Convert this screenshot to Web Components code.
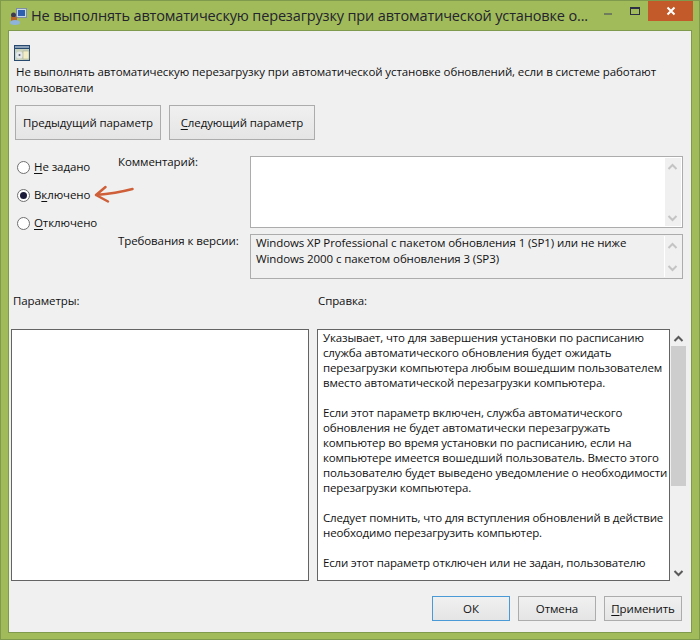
<!DOCTYPE html>
<html lang="ru">
<head>
<meta charset="utf-8">
<style>
    html, body { margin: 0; padding: 0; height: 640px; overflow: hidden; }
    body { font: 11.5px/16px "Open Sans", "Noto Sans", sans-serif; color: #111; }
</style>
</head>
<body>
<template id="template-win-dialog">
    <header>
        <svg class="app" width="20" height="20" viewBox="0 0 20 20">
            <rect x="7.500" y="1.500" width="10" height="9" fill="#c9d6e4" stroke="#7c8fa6"/>
            <rect x="9" y="3" width="7" height="6" fill="#2c5fb0"/>
            <circle cx="4.500" cy="8" r="2.500" fill="#3d3a52"/>
            <rect x="2" y="10" width="6" height="4" fill="#b9682c"/>
            <ellipse cx="6" cy="15.500" rx="5" ry="2.500" fill="#8fb4dc"/>
        </svg>
        <span class="title"><slot name="title"></slot></span>
        <svg class="ctl" width="47" height="20" viewBox="0 0 47 20">
            <rect x="3" y="12" width="8" height="2" fill="#6f7d5c"/>
            <rect x="29.500" y="6.500" width="9" height="7" fill="none" stroke="#2c2f45"/>
            <rect x="29" y="6" width="10" height="2" fill="#2c2f45"/>
        </svg>
        <div class="close"><svg width="10" height="10" viewBox="0 0 10 10"><path d="M1.500 1.500l7 7M8.500 1.500l-7 7" stroke="#fff" stroke-width="2"/></svg></div>
    </header>
    <main><slot></slot></main>
    <style>
        :host {
            display: flex;
            flex-direction: column;
            height: 640px;
            box-sizing: border-box;
            background: #a1bb5b;
            border: 1px solid #7f9a4c;
            padding: 0 7px 6px 7px;
        }
        header {
            height: 29px;
            flex: none;
            display: flex;
            margin-right: -1px;
        }
        .app { margin: 6px 0 0 1px; flex: none; }
        .title {
            margin: 3px 0 0 2px;
            flex: 1;
            min-width: 0;
            font: 14.5px/24px "Open Sans", sans-serif;
            color: #24242e;
            white-space: nowrap;
            letter-spacing: -0.15px;
        }
        .ctl { flex: none; }
        .close {
            width: 45px;
            height: 20px;
            background: #c35a2a;
            display: flex;
            align-items: center;
            justify-content: center;
            flex: none;
        }
        main {
            flex: 1;
            background: #f0f0f0;
            border: 1px solid #7f9a4c;
            display: flex;
            flex-direction: column;
            min-height: 0;
        }
    </style>
</template>

<template id="template-win-button">
    <button><slot></slot></button>
    <style>
        :host { display: block; flex: none; }
        button {
            display: block;
            width: 100%;
            height: 100%;
            padding: 0;
            font: inherit;
            letter-spacing: inherit;
            color: #111;
            border: 1px solid #acacac;
            background: linear-gradient(#f0f0f0, #e5e5e5);
            outline: none;
        }
        :host([primary]) button { border-color: #4a9ad8; }
    </style>
</template>

<template id="template-win-radio">
    <span class="dot"></span><span><slot></slot></span>
    <style>
        :host { display: flex; align-items: center; height: 16px; gap: 4px; }
        .dot {
            width: 11px;
            height: 11px;
            border: 1px solid #707070;
            border-radius: 50%;
            background: #fff;
            display: flex;
            align-items: center;
            justify-content: center;
            flex: none;
        }
        :host([checked]) .dot::after {
            content: "";
            width: 7px;
            height: 7px;
            border-radius: 50%;
            background: #1c1c3a;
        }
    </style>
</template>

<template id="template-win-edit">
    <div class="text"><slot></slot></div>
    <div class="bar">
        <svg width="16" height="10" viewBox="0 0 16 10"><path d="M3.500 7L7.500 3l4 4" fill="none" stroke="currentColor" stroke-width="2"/></svg>
        <svg width="16" height="10" viewBox="0 0 16 10"><path d="M3.500 3L7.500 7l4-4" fill="none" stroke="currentColor" stroke-width="2"/></svg>
    </div>
    <style>
        :host {
            display: flex;
            box-sizing: border-box;
            border: 1px solid #acacac;
            background: #fff;
        }
        .text { flex: 1; padding: 0 5px; min-width: 0; white-space: nowrap; }
        .bar {
            width: 16px;
            margin: 1px;
            background: #f0f0f0;
            color: #c4c4c4;
            display: flex;
            flex-direction: column;
            justify-content: space-between;
            padding: 4px 0 3px;
            flex: none;
        }
        :host([readonly]) { background: #f0f0f0; }
        :host([readonly]) .bar { border-left: 1px solid #fff; margin-left: 0; padding: 5px 0 4px; }
    </style>
</template>

<template id="template-win-list">
    <div class="text"><slot></slot></div>
    <style>
        :host {
            display: block;
            box-sizing: border-box;
            border: 1px solid #646464;
            background: #fff;
            overflow: hidden;
        }
        .text { padding: 0 5px; white-space: nowrap; line-height: 15px; letter-spacing: -0.15px; }
    </style>
</template>

<template id="template-win-scrollbar">
    <svg width="15" height="17" viewBox="0 0 15 17"><path d="M3.500 12L7.500 8l4 4" fill="none" stroke="#5a5a5a" stroke-width="2"/></svg>
    <div class="thumb"></div>
    <div class="track"></div>
    <svg width="15" height="16" viewBox="0 0 15 16"><path d="M3.500 6L7.500 10l4-4" fill="none" stroke="#5a5a5a" stroke-width="2"/></svg>
    <style>
        :host { display: flex; flex-direction: column; width: 15px; flex: none; }
        svg { flex: none; }
        .thumb { height: 140px; flex: none; background: #cdcdcd; }
        .track { flex: 1; }
    </style>
</template>

<template id="template-policy-form">
    <section class="desc">
        <svg width="16" height="16" viewBox="0 0 16 16">
            <rect x="0" y="0" width="16" height="16" fill="#27496d"/>
            <rect x="1" y="1" width="14" height="2" fill="#8aa0b8"/>
            <rect x="1" y="4" width="14" height="11" fill="#c9d2bc"/>
            <circle cx="5.500" cy="10" r="3.500" fill="#e4e8ea"/>
            <circle cx="5.500" cy="10" r="1" fill="#55606a"/>
            <rect x="9" y="6" width="6" height="8" fill="#f2edc4" stroke="#9aa58a" stroke-width=".5"/>
        </svg>
        <p>Не выполнять автоматическую перезагрузку при автоматической установке обновлений, если в системе работают<br>пользователи</p>
    </section>
    <nav>
        <win-button style="width:146px"><span>Пре<u>д</u>ыдущий параметр</span></win-button>
        <win-button style="width:146px"><span><u>С</u>ледующий параметр</span></win-button>
    </nav>
    <section class="state">
        <div class="radios">
            <win-radio><u>Н</u>е задано</win-radio>
            <win-radio checked>В<u>к</u>лючено</win-radio>
            <win-radio><u>О</u>тключено</win-radio>
            <svg class="arrow" width="44" height="20" viewBox="0 0 44 20"><path d="M2 10C14 9 27 7 38.500 4M2 10L11.500 2M2 10L14 16.500" fill="none" stroke="#cf5f38" stroke-width="2.500" stroke-linecap="round"/></svg>
        </div>
        <div class="fields">
            <label class="l1">Комментарий:</label>
            <win-edit class="comment"></win-edit>
            <label class="l2">Требования к версии:</label>
            <win-edit class="req" readonly>Windows XP Professional с пакетом обновления 1 (SP1) или не ниже<br>Windows 2000 с пакетом обновления 3 (SP3)</win-edit>
        </div>
    </section>
    <section class="heads"><span>Параметры:</span><span>Справка:</span></section>
    <section class="panes">
        <win-list class="params"></win-list>
        <win-list class="help">Указывает, что для завершения установки по расписанию<br>служба автоматического обновления будет ожидать<br>перезагрузки компьютера любым вошедшим пользователем<br>вместо автоматической перезагрузки компьютера.<br><br>Если этот параметр включен, служба автоматического<br>обновления не будет автоматически перезагружать<br>компьютер во время установки по расписанию, если на<br>компьютере имеется вошедший пользователь. Вместо этого<br>пользователю будет выведено уведомление о необходимости<br>перезагрузки компьютера.<br><br>Следует помнить, что для вступления обновлений в действие<br>необходимо перезагрузить компьютер.<br><br>Если этот параметр отключен или не задан, пользователю</win-list>
        <win-scrollbar></win-scrollbar>
    </section>
    <footer>
        <win-button primary>ОК</win-button>
        <win-button>Отмена</win-button>
        <win-button><span><u>П</u>рименить</span></win-button>
    </footer>
    <style>
        :host { display: flex; flex-direction: column; flex: 1; min-height: 0; letter-spacing: -0.1px; }
        u { text-underline-offset: 2px; }
        p { margin: 0; }
        .desc { padding: 14px 0 0 5px; }
        .desc svg { display: block; }
        .desc p { margin-top: 3px; margin-left: 2px; white-space: nowrap; }
        nav { display: flex; gap: 8px; height: 35px; margin: 9px 0 0 6px; }
        .state { display: flex; margin-top: 16px; height: 123px; }
        .radios {
            width: 109px;
            padding: 3px 0 0 8px;
            box-sizing: border-box;
            display: flex;
            flex-direction: column;
            gap: 12px;
            position: relative;
            flex: none;
        }
        .arrow { position: absolute; left: 85px; top: 29px; }
        .fields {
            display: grid;
            grid-template-columns: 132px 433px;
            grid-template-rows: 72px 45px;
            row-gap: 6px;
        }
        .l1 { margin-top: -2px; }
        .l2 { margin-top: -1px; }
        .heads { display: flex; margin-top: 14px; padding-left: 4px; height: 16px; }
        .heads span:first-child { width: 305px; }
        .panes { display: flex; height: 252px; margin: 20px 0 0 2px; }
        .params { width: 298px; flex: none; }
        .help { width: 353px; margin-left: 8px; flex: none; }
        win-scrollbar { margin-left: 1px; }
        footer { display: flex; gap: 8px; margin: 15px 0 0 423px; height: 25px; }
        footer win-button { width: 78px; }
    </style>
</template>

<win-dialog>
    <span slot="title">Не выполнять автоматическую перезагрузку при автоматической установке о...</span>
    <policy-form></policy-form>
</win-dialog>

<script>
    // Every element clones its own template into an open shadow root
    const define = (name, id) => customElements.define(name, class extends HTMLElement {
        constructor() {
            super();
            this.attachShadow({ mode: 'open' })
                .appendChild(document.getElementById(id).content.cloneNode(true));
        }
    });
    define('win-button', 'template-win-button');
    define('win-radio', 'template-win-radio');
    define('win-edit', 'template-win-edit');
    define('win-list', 'template-win-list');
    define('win-scrollbar', 'template-win-scrollbar');
    define('policy-form', 'template-policy-form');
    define('win-dialog', 'template-win-dialog');
</script>
</body>
</html>
